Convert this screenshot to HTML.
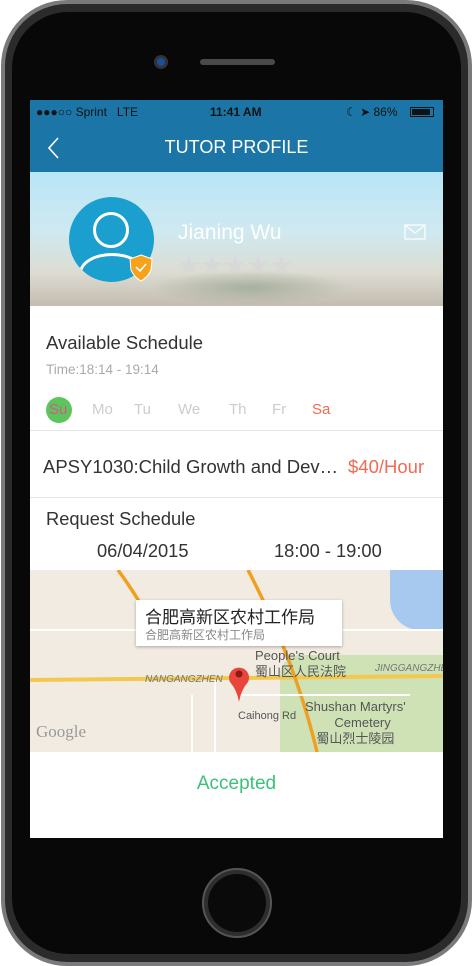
<!DOCTYPE html>
<html><head><meta charset="utf-8"><style>
*{margin:0;padding:0;box-sizing:border-box}
body{width:473px;height:966px;background:#fff;position:relative;overflow:hidden;font-family:"Liberation Sans","Noto Sans CJK SC",sans-serif}
.rim{position:absolute;left:1px;top:0;width:471px;height:966px;border-radius:66px;background:#7a7a7c}
.band{position:absolute;left:5px;top:4px;width:463px;height:958px;border-radius:62px;background:#2b2b2c}
.inner{position:absolute;left:12px;top:12px;width:449px;height:942px;border-radius:56px;background:#080808}
.screen{position:absolute;left:30px;top:100px;width:413px;height:738px;background:#fff;overflow:hidden}
.abs{position:absolute}
</style></head><body>
<div class="rim"></div><div class="band"></div><div class="inner"></div>
<div class="abs" style="left:154px;top:55px;width:14px;height:14px;border-radius:50%;background:#333;"></div>
<div class="abs" style="left:157px;top:58px;width:8px;height:8px;border-radius:50%;background:#1a4f9a;"></div>
<div class="abs" style="left:200px;top:59px;width:75px;height:6px;border-radius:3px;background:#4a4a4a;"></div>
<div class="abs" style="left:202px;top:868px;width:70px;height:70px;border-radius:50%;background:#2e2e2e;border:2px solid #555"></div>
<div class="abs" style="left:208px;top:874px;width:58px;height:58px;border-radius:50%;background:#0a0a0a;"></div>
<div class="screen">
 <div class="abs" style="left:0;top:0;width:413px;height:72px;background:#1b76a7"></div>
 <div class="abs" style="left:6px;top:5px;font-size:12px;color:#111">●●●○○ Sprint &nbsp; LTE</div>
 <div class="abs" style="left:180px;top:5px;font-size:12px;color:#111;font-weight:bold">11:41 AM</div>
 <div class="abs" style="left:316px;top:5px;font-size:12px;color:#111">☾ ➤ 86%</div>
 <div class="abs" style="left:380px;top:7px;width:24px;height:10px;border:1px solid #111;padding:1px"><div style="width:18px;height:6px;background:#111"></div></div>
 <svg class="abs" style="left:16px;top:36px" width="14" height="24"><path d="M12 2 L3 12 L12 22" stroke="#fff" stroke-width="1.6" fill="none"/></svg>
 <div class="abs" style="left:0;top:37px;width:413px;text-align:center;font-size:18px;color:#fff">TUTOR PROFILE</div>
 <div class="abs" style="left:0;top:72px;width:413px;height:134px;background:linear-gradient(180deg,#b8e6f8 0%,#cfe9f0 45%,#dcdcd2 75%,#c4bcb0 100%)"></div>
 <div class="abs" style="left:120px;top:170px;width:200px;height:36px;background:radial-gradient(ellipse,#a8b0a0 0%,rgba(180,185,170,0) 70%)"></div>
 <div class="abs" style="left:39px;top:97px;width:85px;height:85px;border-radius:50%;background:#1a9fcf;overflow:hidden">
  <div class="abs" style="left:24px;top:15px;width:36px;height:36px;border-radius:50%;border:3px solid #fff"></div>
  <div class="abs" style="left:10px;top:56px;width:66px;height:40px;border-radius:50%;border:3px solid #fff"></div>
 </div>
 <svg class="abs" style="left:99px;top:154px" width="24" height="28"><path d="M12 1 L23 5 L22 16 Q19 23 12 27 Q5 23 2 16 L1 5 Z" fill="#f6a21b" stroke="#fff" stroke-width="1"/><path d="M7 13 L11 17 L17 10" stroke="#fff" stroke-width="1.6" fill="none"/></svg>
 <div class="abs" style="left:148px;top:121px;font-size:21px;color:#fff">Jianing Wu</div>
 <div class="abs" style="left:148px;top:148px;font-size:22px;color:#d8d8d8;letter-spacing:1px">★★★★★</div>
 <svg class="abs" style="left:374px;top:124px" width="22" height="16"><rect x="1" y="1" width="20" height="14" fill="none" stroke="#fff" stroke-width="1.2"/><path d="M1 1 L11 9 L21 1" stroke="#fff" stroke-width="1.2" fill="none"/></svg>
 <div class="abs" style="left:16px;top:232px;font-size:18.5px;color:#333">Available Schedule</div>
 <div class="abs" style="left:16px;top:262px;font-size:13.5px;color:#aaa">Time:18:14 - 19:14</div>
 <div class="abs" style="left:16px;top:297px;width:26px;height:26px;border-radius:50%;background:#5cc65c"></div>
 <div class="abs" style="left:19px;top:301px;font-size:15px;color:#d9558f">Su</div>
 <div class="abs" style="left:62px;top:301px;font-size:15px;color:#ccc">Mo</div>
 <div class="abs" style="left:104px;top:301px;font-size:15px;color:#ccc">Tu</div>
 <div class="abs" style="left:148px;top:301px;font-size:15px;color:#ccc">We</div>
 <div class="abs" style="left:199px;top:301px;font-size:15px;color:#ccc">Th</div>
 <div class="abs" style="left:242px;top:301px;font-size:15px;color:#ccc">Fr</div>
 <div class="abs" style="left:282px;top:301px;font-size:15px;color:#f26a4f">Sa</div>
 <div class="abs" style="left:0;top:330px;width:413px;height:1px;background:#e4e4e4"></div>
 <div class="abs" style="left:13px;top:356px;font-size:18.5px;color:#333">APSY1030:Child Growth and Dev…</div>
 <div class="abs" style="left:318px;top:356px;font-size:18.5px;color:#f26a4f">$40/Hour</div>
 <div class="abs" style="left:0;top:397px;width:413px;height:1px;background:#e4e4e4"></div>
 <div class="abs" style="left:16px;top:408px;font-size:18.3px;color:#333">Request Schedule</div>
 <div class="abs" style="left:67px;top:440px;font-size:18.3px;color:#333">06/04/2015</div>
 <div class="abs" style="left:244px;top:440px;font-size:18.3px;color:#333">18:00 - 19:00</div>
 <div class="abs" style="left:0;top:470px;width:413px;height:182px;background:#f2ebe2;overflow:hidden">
  <div class="abs" style="left:250px;top:85px;width:163px;height:97px;background:#cfe2b6;border-radius:20px 0 0 0"></div>
  <div class="abs" style="left:360px;top:0;width:53px;height:60px;background:#a7c9f0;border-radius:0 0 0 30px"></div>
  <svg class="abs" style="left:0;top:0" width="413" height="182"><path d="M0 110 L413 106" stroke="#f2c84e" stroke-width="4" fill="none"/><path d="M88 0 Q110 30 125 60" stroke="#f0a020" stroke-width="3.5" fill="none"/><path d="M218 0 Q265 90 287 182" stroke="#f0a020" stroke-width="3.5" fill="none"/><path d="M162 125 L162 182 M185 110 L185 182 M210 125 L380 125 M0 60 L413 60" stroke="#fff" stroke-width="2" fill="none"/></svg>
  <div class="abs" style="left:106px;top:30px;width:206px;height:46px;background:#fff;box-shadow:0 1px 3px rgba(0,0,0,.3)"></div>
  <div class="abs" style="left:115px;top:33px;font-size:17px;color:#222">合肥高新区农村工作局</div>
  <div class="abs" style="left:115px;top:56px;font-size:12px;color:#888">合肥高新区农村工作局</div>
  <div class="abs" style="left:225px;top:78px;font-size:13px;color:#555;line-height:16px">People's Court<br>蜀山区人民法院</div>
  <div class="abs" style="left:115px;top:104px;font-size:10px;color:#777;font-style:italic">NANGANGZHEN</div>
  <div class="abs" style="left:345px;top:93px;font-size:10px;color:#777;font-style:italic">JINGGANGZHEN</div>
  <div class="abs" style="left:208px;top:140px;font-size:11px;color:#555">Caihong Rd</div>
  <div class="abs" style="left:275px;top:129px;font-size:13px;color:#555;line-height:16px;text-align:center">Shushan Martyrs'<br>&nbsp;&nbsp;&nbsp;&nbsp;Cemetery<br>蜀山烈士陵园</div>
  <div class="abs" style="left:6px;top:152px;font-size:17px;color:#999;font-family:'Liberation Serif',serif">Google</div>
  <svg class="abs" style="left:197px;top:92px" width="24" height="42"><path d="M12 40 Q10 28 3 20 A10 10 0 1 1 21 20 Q14 28 12 40Z" fill="#e8453c"/><circle cx="12" cy="12" r="3.5" fill="#8a1a14"/></svg>
 </div>
 <div class="abs" style="left:0;top:673px;width:413px;text-align:center;font-size:19px;color:#3cc07a">Accepted</div>
</div>
</body></html>
